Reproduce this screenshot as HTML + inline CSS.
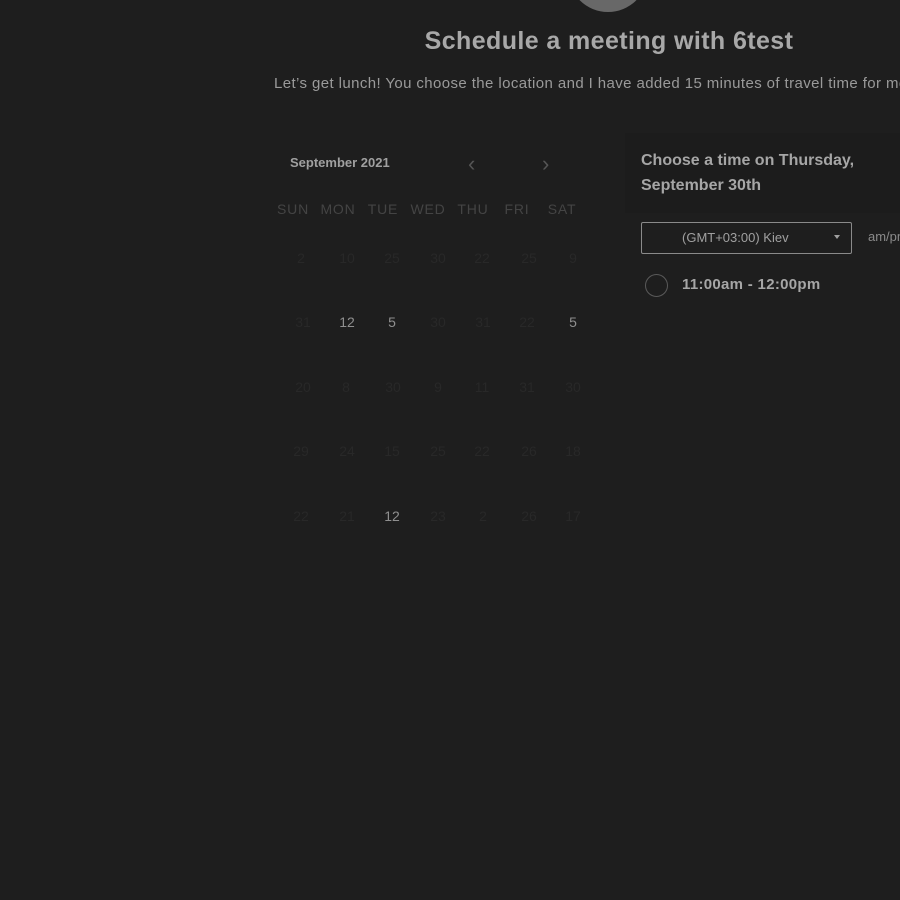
<!DOCTYPE html>
<html><head><style>
body{margin:0;width:900px;height:900px;background:#1e1e1e;font-family:"Liberation Sans",sans-serif;overflow:hidden;position:relative}
.a{position:absolute}
.av{left:568px;top:-68px;width:80px;height:80px;border-radius:50%;background:#686868}
.t{left:300px;width:618px;top:27px;text-align:center;font-size:25px;font-weight:bold;color:#a8a8a8;letter-spacing:0.4px}
.s{left:274px;top:75px;font-size:15px;color:#9a9a9a;white-space:nowrap;letter-spacing:0.4px}
.panel{left:625px;top:133px;width:275px;height:80px;background:#1c1c1c}
.cal{left:268px;top:133px;width:330px;height:440px;background:#1e1e1e}
.mo{left:290px;top:155px;font-size:13px;font-weight:bold;color:#a0a0a0}
.nav{color:#555;font-size:22px;top:151px}
.dow{top:201px;font-size:14px;color:#444;letter-spacing:0.8px;width:44px;text-align:center}
.d{font-size:14px;width:40px;text-align:center;color:#282828}
.d.b{color:#8f8f8f}
.h{left:641px;top:148px;font-size:16px;font-weight:bold;color:#a6a6a6;line-height:25px}
.sel{left:641px;top:222px;width:209px;height:30px;border:1px solid #8a8a8a;border-radius:2px;color:#a0a0a0;font-size:13px;line-height:30px;box-sizing:content-box}
.ampm{left:868px;top:229px;font-size:13px;color:#8a8a8a}
.rad{left:645px;top:274px;width:21px;height:21px;border:1.5px solid #5a5a5a;border-radius:50%}
.slot{left:682px;top:276px;font-size:15px;font-weight:bold;color:#a6a6a6;letter-spacing:0.3px}
</style></head><body>
<div class="a av"></div>
<div class="a t">Schedule a meeting with 6test</div>
<div class="a s">Let’s get lunch! You choose the location and I have added 15 minutes of travel time for me</div>
<div class="a cal"></div>
<div class="a panel"></div>
<div class="a mo">September 2021</div>
<div class="a nav" style="left:468px">‹</div>
<div class="a nav" style="left:542px">›</div>
<div class="a dow" style="left:271px">SUN</div>
<div class="a dow" style="left:316px">MON</div>
<div class="a dow" style="left:361px">TUE</div>
<div class="a dow" style="left:406px">WED</div>
<div class="a dow" style="left:451px">THU</div>
<div class="a dow" style="left:495px">FRI</div>
<div class="a dow" style="left:540px">SAT</div>

<div class="a d" style="left:281px;top:250px">2</div><div class="a d" style="left:327px;top:250px">10</div><div class="a d" style="left:372px;top:250px">25</div><div class="a d" style="left:418px;top:250px">30</div><div class="a d" style="left:462px;top:250px">22</div><div class="a d" style="left:509px;top:250px">25</div><div class="a d" style="left:553px;top:250px">9</div>
<div class="a d" style="left:283px;top:314px">31</div><div class="a d b" style="left:327px;top:314px">12</div><div class="a d b" style="left:372px;top:314px">5</div><div class="a d" style="left:418px;top:314px">30</div><div class="a d" style="left:463px;top:314px">31</div><div class="a d" style="left:507px;top:314px">22</div><div class="a d b" style="left:553px;top:314px">5</div>
<div class="a d" style="left:283px;top:379px">20</div><div class="a d" style="left:326px;top:379px">8</div><div class="a d" style="left:373px;top:379px">30</div><div class="a d" style="left:418px;top:379px">9</div><div class="a d" style="left:462px;top:379px">11</div><div class="a d" style="left:507px;top:379px">31</div><div class="a d" style="left:553px;top:379px">30</div>
<div class="a d" style="left:281px;top:443px">29</div><div class="a d" style="left:327px;top:443px">24</div><div class="a d" style="left:372px;top:443px">15</div><div class="a d" style="left:418px;top:443px">25</div><div class="a d" style="left:462px;top:443px">22</div><div class="a d" style="left:509px;top:443px">26</div><div class="a d" style="left:553px;top:443px">18</div>
<div class="a d" style="left:281px;top:508px">22</div><div class="a d" style="left:327px;top:508px">21</div><div class="a d b" style="left:372px;top:508px">12</div><div class="a d" style="left:418px;top:508px">23</div><div class="a d" style="left:463px;top:508px">2</div><div class="a d" style="left:509px;top:508px">26</div><div class="a d" style="left:553px;top:508px">17</div>

<div class="a h">Choose a time on Thursday,<br>September 30th</div>
<div class="a sel"><span style="position:absolute;left:40px">(GMT+03:00) Kiev</span><span style="position:absolute;left:192px;top:12px;width:0;height:0;border-left:3.5px solid transparent;border-right:3.5px solid transparent;border-top:4px solid #a0a0a0"></span></div>
<div class="a ampm">am/pm</div>
<div class="a rad"></div>
<div class="a slot">11:00am - 12:00pm</div>
</body></html>
